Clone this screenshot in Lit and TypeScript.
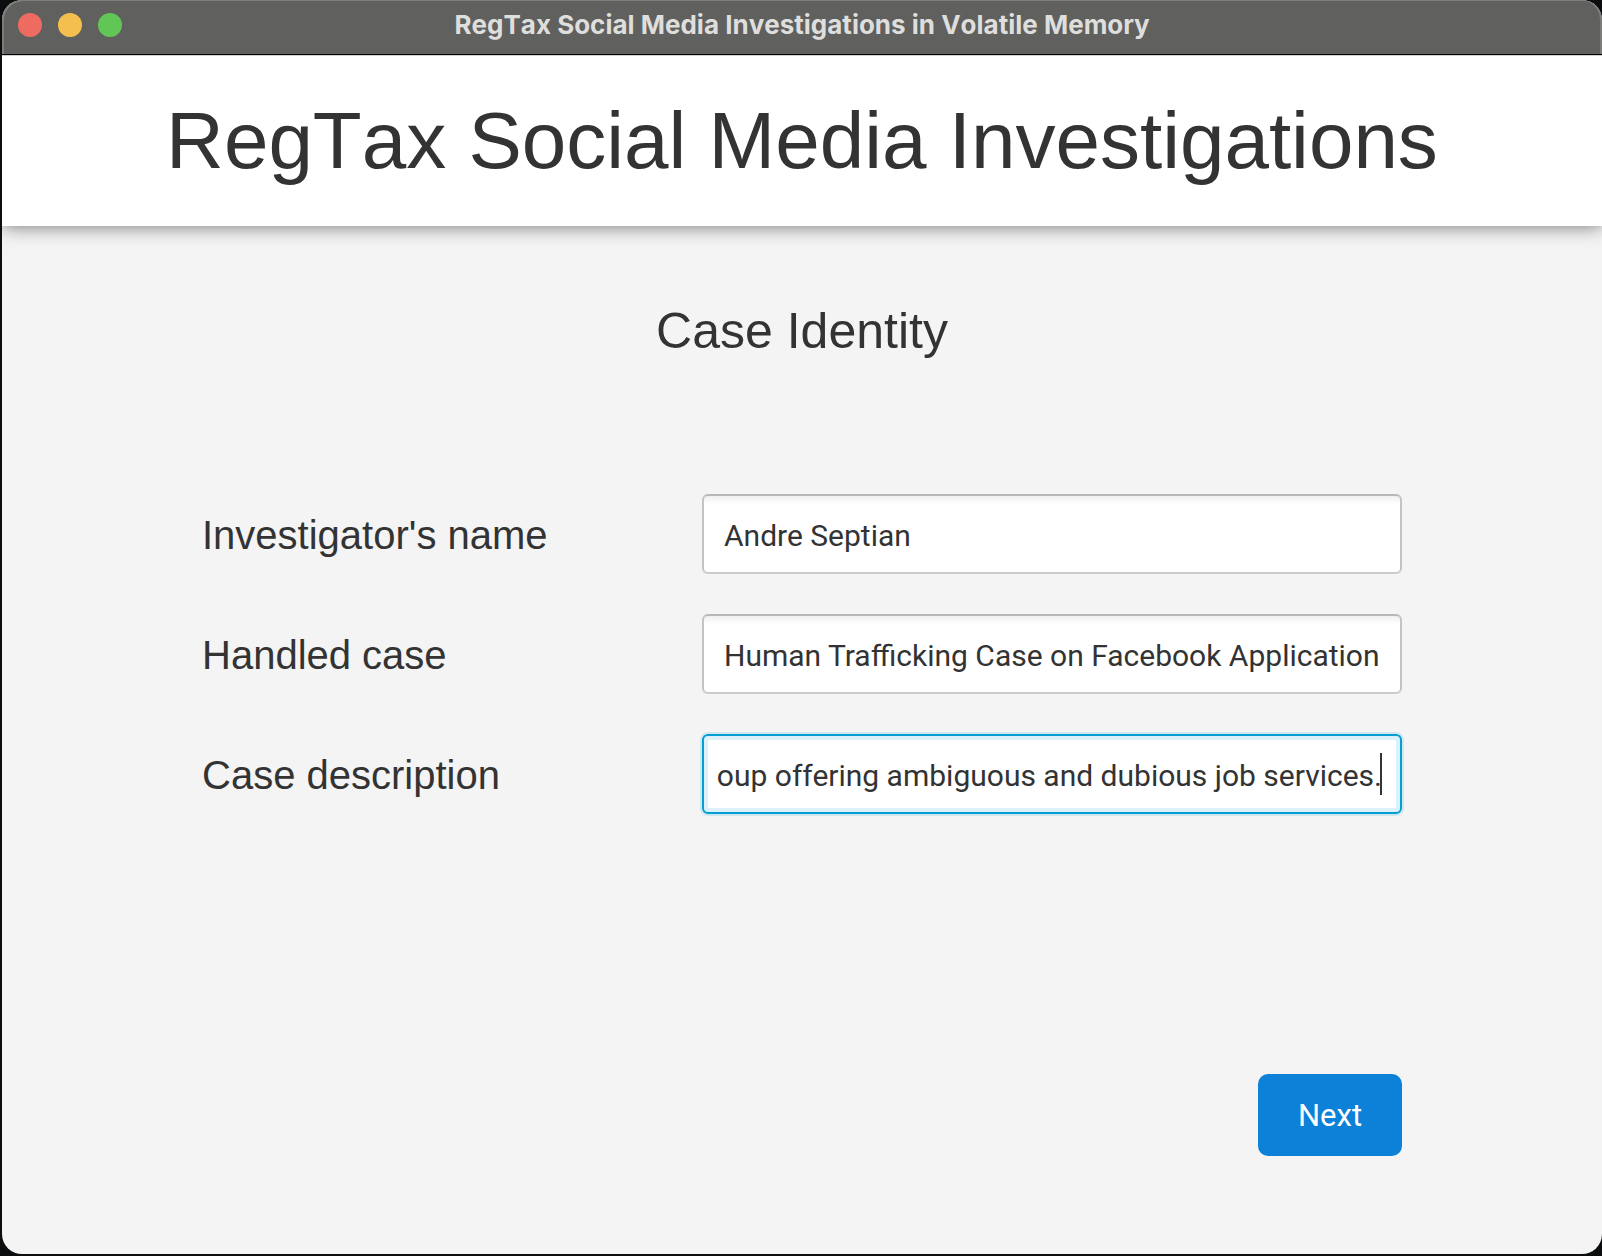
import { LitElement, html, css } from "lit";
import { customElement, state } from "lit/decorators.js";

interface Field {
  id: string;
  label: string;
  value: string;
  active?: boolean;
}

@customElement("app-root")
export class AppRoot extends LitElement {
  static styles = css`
    :host {
      display: flex;
      box-sizing: border-box;
      min-height: 100vh;
      padding: 0 0 2px 2px;
      background: #0c0d0e;
      color: #333333;
      font-family: "Liberation Sans", Arial, sans-serif;
      font-kerning: none;
    }
    * {
      box-sizing: border-box;
    }
    .window {
      flex: 1;
      display: flex;
      flex-direction: column;
      border-radius: 20px;
      overflow: hidden;
      background: #f4f4f4;
    }
    .titlebar {
      position: relative;
      z-index: 1;
      display: grid;
      grid-template-columns: 1fr auto 1fr;
      align-items: center;
      height: 55px;
      padding: 0 16px 4px;
      background: #60605e;
      border-bottom: 1px solid #000000;
      border-radius: 20px 20px 0 0;
      box-shadow: inset 2px 1px 0 #7c7c7a, inset -2px 0 0 #7c7c7a;
    }
    .lights {
      display: flex;
      gap: 16px;
    }
    .light {
      width: 24px;
      height: 24px;
      padding: 0;
      border: 0;
      border-radius: 50%;
    }
    .close {
      background: #ed6b60;
    }
    .minimize {
      background: #f5bf50;
    }
    .zoom {
      background: #62c656;
    }
    .caption {
      color: #dededd;
      font: 700 26px/32px Inter, sans-serif;
      font-kerning: none;
    }
    .header {
      display: flex;
      align-items: center;
      justify-content: center;
      height: 171px;
      background: #ffffff;
      border-top: 1px solid #d0d0d0;
      box-shadow: 0 0 18px rgba(0, 0, 0, 0.55);
    }
    .title {
      margin: 0;
      font-size: 80px;
      line-height: 92px;
      font-weight: 400;
      white-space: nowrap;
    }
    .form {
      flex: 1;
      display: flex;
      flex-direction: column;
      padding: 76px 12.5% 98px;
    }
    .section {
      margin: 0 0 134px;
      font-size: 50px;
      line-height: 58px;
      font-weight: 400;
      text-align: center;
    }
    .fields {
      display: grid;
      gap: 40px;
    }
    .row {
      display: grid;
      grid-template-columns: 5fr 7fr;
      align-items: center;
    }
    .label {
      padding-top: 2px;
      font-size: 40px;
      line-height: 46px;
    }
    .control {
      position: relative;
      display: flex;
    }
    .input {
      flex: 1;
      min-width: 0;
      height: 80px;
      padding: 2px 14px 0 20px;
      border: 2px solid #cacaca;
      border-color: #b9b9b9 #c4c4c4 #cacaca;
      border-radius: 6px;
      outline: 0;
      background: linear-gradient(#f0f0f0, #ffffff 8px);
      color: #333333;
      font: 400 30px/40px Roboto, sans-serif;
    }
    .input.active {
      padding: 2px 18px 0 4px;
      border-color: #039ed3;
      background: #ffffff;
      box-shadow: 0 0 0 2px #cfe7ef, inset 0 0 0 4px #dcf1f9;
      text-align: right;
    }
    .caret {
      position: absolute;
      top: 19px;
      right: 20px;
      width: 2px;
      height: 42px;
      background: #333333;
    }
    .next {
      align-self: flex-end;
      margin-top: auto;
      width: 144px;
      height: 82px;
      padding: 2px 0 0;
      border: 0;
      border-radius: 10px;
      background: #0d80d8;
      color: #ffffff;
      font: 400 31px/40px Roboto, sans-serif;
    }
  `;

  @state() private fields: Field[] = [
    { id: "name", label: "Investigator's name", value: "Andre Septian" },
    { id: "case", label: "Handled case", value: "Human Trafficking Case on Facebook Application" },
    {
      id: "description",
      label: "Case description",
      value: "oup offering ambiguous and dubious job services.",
      active: true,
    },
  ];

  private renderField(f: Field) {
    return html`<div class="row">
      <label class="label" for=${f.id}>${f.label}</label>
      <div class="control">
        <input class=${f.active ? "input active" : "input"} id=${f.id} type="text" .value=${f.value} />
        ${f.active ? html`<span class="caret"></span>` : null}
      </div>
    </div>`;
  }

  render() {
    return html`<div class="window">
      <div class="titlebar">
        <div class="lights">
          <button class="light close" aria-label="Close"></button>
          <button class="light minimize" aria-label="Minimize"></button>
          <button class="light zoom" aria-label="Zoom"></button>
        </div>
        <span class="caption">RegTax Social Media Investigations in Volatile Memory</span>
      </div>
      <header class="header">
        <h1 class="title">RegTax Social Media Investigations</h1>
      </header>
      <form class="form" @submit=${(e: Event) => e.preventDefault()}>
        <h2 class="section">Case Identity</h2>
        <div class="fields">${this.fields.map((f) => this.renderField(f))}</div>
        <button class="next" type="submit">Next</button>
      </form>
    </div>`;
  }
}
